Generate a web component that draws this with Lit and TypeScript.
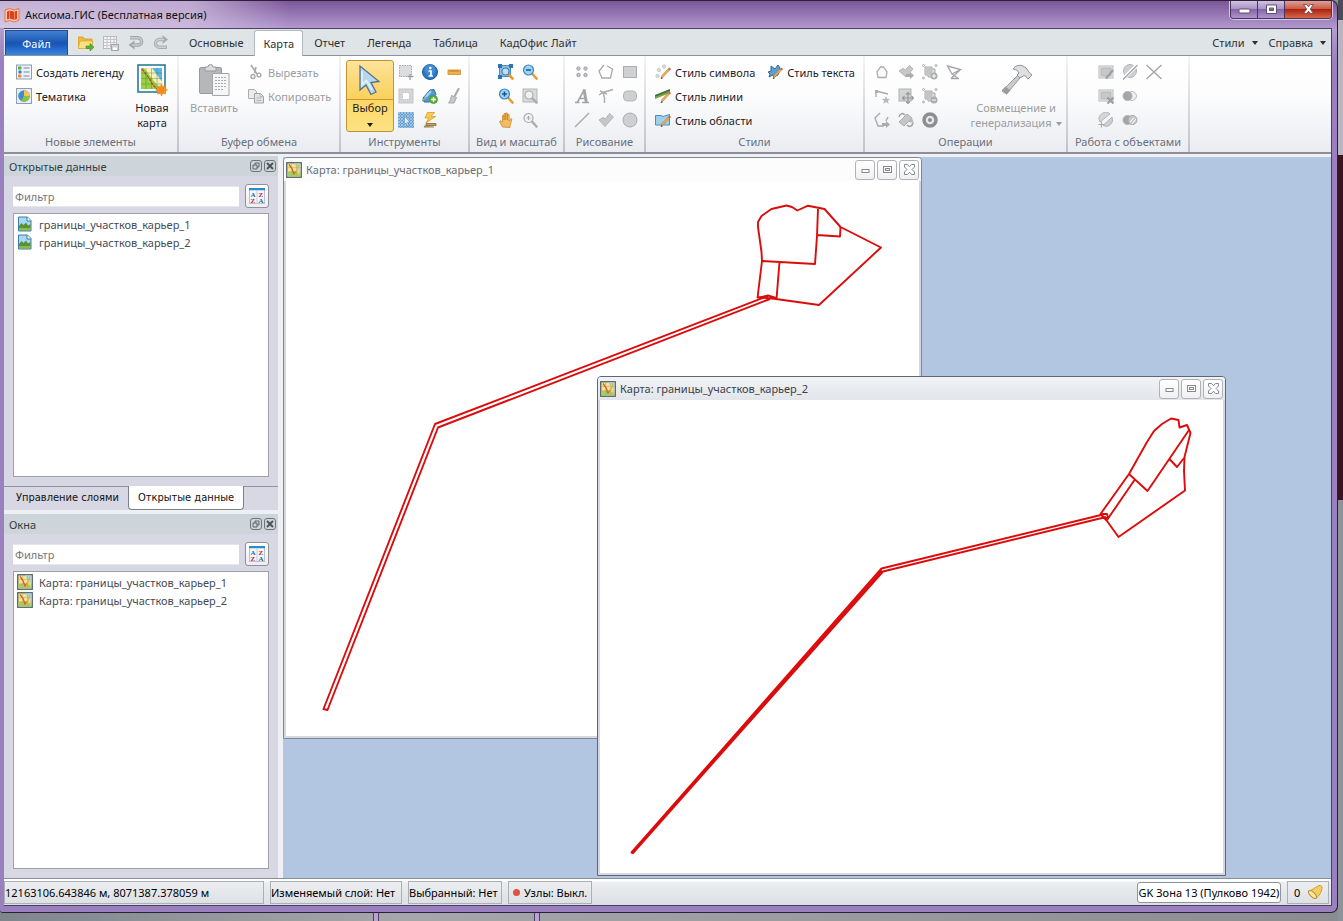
import { LitElement, html, css, svg } from "lit";
import { customElement, property } from "lit/decorators.js";

const G = "#a9abae";
const pencil = svg`<path d="M15 5.500 8.500 12.500 6 15l1-3.500L13.500 4.500z" fill="#f0b25a" stroke="#b5742a" stroke-width=".6"/><path d="M13 5l1.300-1.500L16 5l-1.300 1.400z" fill="#d0604a"/><path d="M6 15l.6-2 1.300 1.200z" fill="#444"/>`;
const lens = (x: number, y: number, r: number, fill: string, rim: string, handle: string) => svg`
  <path d="M${x + r * 0.7} ${y + r * 0.7}L14.500 14.500" stroke="${handle}" stroke-width="2.600" stroke-linecap="round"/>
  <circle cx="${x}" cy="${y}" r="${r}" fill="${fill}" stroke="${rim}" stroke-width="1.200"/>`;
const groupBox = svg`<path d="M3 3h7v2h3v8H6v-2H3z" fill="#d8d9db" stroke="${G}"/><rect x="4" y="4" width="6" height="7" fill="#c2c4c6"/><g fill="none" stroke="${G}"><circle cx="1.500" cy="1.500" r="1"/><circle cx="14" cy="1.500" r="1"/><circle cx="1.500" cy="14" r="1"/></g>`;

const icons: Record<string, unknown> = {
  app: svg`<path d="M1 3l4.500-1.500 5 1.500L15 1.500v11.500L10.500 15l-5-1.500L1 15z" fill="#f7cdb4" stroke="#e8704a"/><path d="M3 4.500l2.500-1 5 1.300 2.500-1v8.200l-2.500 1-5-1.500-2.500 1z" fill="#d8431c"/><path d="M5.500 3.500v8M10.500 4.800v8.200" stroke="#f29a74" stroke-width=".8"/>`,
  open: svg`<path d="M0 2h5l1.500 2H14v9H0z" fill="#eeb93f" stroke="#d19a22" stroke-width=".8"/><path d="M2 6h13l-2 7.500H0z" fill="#fadf83" stroke="#dba833" stroke-width=".8"/><path d="M8 11h4V8.500l4 3.700-4 3.700V13.500H8z" fill="#63ae3a" stroke="#3f8424" stroke-width=".6"/>`,
  table: svg`<rect x=".5" y="1.500" width="13" height="12" fill="#f6f6f7" stroke="#b6b8ba"/><path d="M.5 4.500h13M.5 7.500h13M.5 10.500h13M4 1.500v12M7.500 1.500v12M11 1.500v12" stroke="#c3c5c7"/><rect x="8.500" y="9.500" width="7" height="6" fill="#cfd1d3" stroke="#a3a5a8"/><rect x="10" y="12.500" width="4" height="2.500" fill="#fff"/>`,
  undo: svg`<path d="M2 2.800h8a3.600 3.600 0 0 1 0 7.200H5" fill="none" stroke="#a4a7aa" stroke-width="3.400"/><path d="M6.500 5.500v9L.5 10z" fill="#a4a7aa"/><path d="M2 2.800h8a3.600 3.600 0 0 1 0 7.200H4" fill="none" stroke="#c9cbcd" stroke-width="1.400"/>`,
  redo: svg`<path d="M11 4.500H6.500a3.900 3.900 0 0 0 0 7.800H14" fill="none" stroke="#a9acaf" stroke-width="3.400"/><path d="M9.500 0v9L15 4.500z" fill="#a9acaf"/><path d="M11 4.500H6.500a3.900 3.900 0 0 0 0 7.800H13" fill="none" stroke="#cfd1d3" stroke-width="1.400"/>`,
  legend: svg`<rect x=".5" y="1" width="15" height="14" fill="#eef3fa" stroke="#8d9db4"/><rect x="2" y="2.500" width="3.500" height="3" fill="#5fb04a"/><circle cx="4" cy="8" r="1.700" fill="#2d86c9"/><rect x="2" y="10.500" width="3.500" height="3" fill="#ef8e3a"/><path d="M7.500 4h6M7.500 8h6M7.500 12h6" stroke="#9dabc0" stroke-width="1.300"/>`,
  theme: svg`<rect x=".5" y=".5" width="15" height="15" fill="#e8edf5" stroke="#8d9db4"/><circle cx="8" cy="8" r="5.800" fill="#3d8fcb"/><path d="M8 8V2.200A5.800 5.800 0 0 1 13.800 8z" fill="#f1c551"/><path d="M8 8h5.800A5.800 5.800 0 0 1 5 13z" fill="#8dbf50"/>`,
  cut: svg`<path d="M3 1l6 9M8 3 6.500 9" stroke="#a6a8ab" stroke-width="1.600"/><circle cx="5" cy="12.500" r="2" fill="none" stroke="#a6a8ab" stroke-width="1.400"/><circle cx="11" cy="11" r="1.900" fill="none" stroke="#a6a8ab" stroke-width="1.400"/>`,
  copy: svg`<path d="M.5 1.500h6l2 2v7h-8z" fill="#ececed" stroke="#aaacaf"/><path d="M6.500 5.500h6l3 3v6.500h-9z" fill="#e2e3e4" stroke="#a2a4a7"/><path d="M12 5.500v3h3.500M8.500 10h5M8.500 12.500h5" fill="none" stroke="#b4b6b8"/>`,
  select: svg`<rect x="1.500" y="1.500" width="12" height="11" fill="#dcddde" stroke="#a5a7aa" stroke-dasharray="1.500 1"/><path d="M12 10v6M9.500 12.500h6" stroke="#9c9ea1" stroke-width="1.300"/>`,
  info: svg`<circle cx="8" cy="8" r="7.500" fill="#2878c8" stroke="#1d5c9e"/><circle cx="8" cy="5.500" r="5.500" fill="#5aa0e0" opacity=".5"/><path d="M6.500 7H9v5M6.500 12h4.500" fill="none" stroke="#fff" stroke-width="1.700"/><circle cx="8.300" cy="4" r="1.300" fill="#fff"/>`,
  ruler: svg`<rect x="2" y="6" width="12.500" height="4.500" fill="#efb04a" stroke="#d08d2b" stroke-width=".8"/><path d="M4 6v2M6 6v2M8 6v2M10 6v2M12 6v2" stroke="#a86e1c" stroke-width=".7"/>`,
  frame: svg`<rect x="1" y="1" width="14" height="14" fill="#d3d5d7" stroke="#c3c5c7"/><rect x="4.500" y="4.500" width="7" height="7" fill="#fff" stroke="#c0c2c4" stroke-dasharray="1.500 1"/>`,
  tagadd: svg`<path d="M1 10l7-8 4-.5 2 5-6.500 7.500H2z" fill="#4d9bd3" stroke="#2c6d9f"/><path d="M3 10l6-7" stroke="#a9d5f0" stroke-width="2"/><path d="M0 13l5-4" stroke="#9aa0a6" stroke-width="1.500"/><circle cx="11.500" cy="11.500" r="4" fill="#5db43c" stroke="#3f8d28" stroke-width=".7"/><path d="M11.500 9.200v4.600M9.200 11.500h4.600" stroke="#fff" stroke-width="1.500"/>`,
  broom: svg`<path d="M12.500 1 9 7.500" stroke="#a9abad" stroke-width="2.200" stroke-linecap="round"/><path d="M5.500 7.500l5 2L8 15H2.500c2-2 2-4.500 3-7.500z" fill="#c6c8ca" stroke="#a4a6a9"/>`,
  gridsel: svg`<rect width="16" height="16" fill="#9cc4e6"/><path d="M0 2.500h16M0 5.500h16M0 8.500h16M0 11.500h16M0 14.500h16M2.500 0v16M5.500 0v16M8.500 0v16M11.500 0v16M14.500 0v16" stroke="#6b9fce" stroke-dasharray="2 1"/><path d="M6.500 4l5.500 6-2.500.3 1.200 2.900-1.500.6L8 11l-1.700 1.500z" fill="#dcebf8" stroke="#5d8dbb" stroke-width=".7"/>`,
  flash: svg`<path d="M5.500.5h7L9 4.500h4.500L4 11l3-5H3z" fill="#f8cb52" stroke="#d69a24" stroke-width=".8"/><path d="M4 11.500h10v2H4zM3 13.500l-1 1.500h10" fill="#c9a05a" stroke="#85683a" stroke-width=".8"/>`,
  zoomfit: svg`<rect x="1.500" y="1.500" width="11" height="11" fill="#8fc1e6" stroke="#4a8cc0"/><path d="M0 0h4v4H0zM11 0h4v4h-4zM0 11h4v4H0z" fill="#2e74b0"/>${lens(7.500, 7.500, 3.500, "#bfe0f5", "#3d81b8", "#e39a35")}`,
  zoomout: svg`${lens(6.500, 6, 5, "#9fd3f2", "#3c87bf", "#e59b36")}<path d="M4 6h5" stroke="#19568a" stroke-width="1.500"/>`,
  zoomin: svg`${lens(6.500, 6, 5, "#9fd3f2", "#3c87bf", "#e59b36")}<path d="M4 6h5M6.500 3.500v5" stroke="#19568a" stroke-width="1.500"/>`,
  zoomsel: svg`<rect x="1" y="1" width="14" height="13" fill="#d9dadc" stroke="#b3b5b7"/>${lens(7, 7, 4, "#f1f1f2", "#acaeb1", "#adafb2")}`,
  hand: svg`<path d="M4.500 15 1.500 9.500l1-.8L4.500 10V3.500h1.500V8V1.500h1.700V8V1h1.700v7V2.500h1.700V9l1.800-2.500 1 .8L12 14v1.500z" fill="#f4bd62" stroke="#c98a2e" stroke-width=".8"/>`,
  zoomall: svg`${lens(6.500, 6, 4.500, "#f1f1f2", "#a7a9ac", "#adafb2")}<path d="M4.500 6h4M6.500 4v4" stroke="#a7a9ac"/>`,
  points: svg`<g fill="#c4c6c9" stroke="#9da0a3"><circle cx="4.500" cy="4.500" r="1.700"/><circle cx="11.500" cy="4.500" r="1.700"/><circle cx="4.500" cy="11" r="1.700"/><circle cx="11.500" cy="11" r="1.700"/></g>`,
  polygon: svg`<path d="M6 1 1 7l3 7h8.500l2-9L9 2" fill="none" stroke="${G}" stroke-width="1.300"/>`,
  rect: svg`<rect x="1.500" y="2.500" width="13" height="11" fill="#cfd0d2" stroke="#abadb0"/>`,
  textA: svg`<path d="M1 14.500h4.500M8 14.500h7M3.500 14 10.500 1.500M5.500 10.500h6" fill="none" stroke="#a3a5a8" stroke-width="1.600"/><path d="M10 1.500 12.300 14" stroke="#a3a5a8" stroke-width="3"/>`,
  polyline: svg`<path d="M1 7l4-2.500L15 1.500M5 4.500l1.500 5V15M2 3l7 3" fill="none" stroke="${G}" stroke-width="1.400"/>`,
  rrect: svg`<rect x="1.500" y="3" width="13" height="10" rx="4" fill="#cfd0d2" stroke="#b1b3b5"/>`,
  line: svg`<path d="M1 15 15 1" stroke="${G}" stroke-width="1.400"/>`,
  region: svg`<path d="M1 8l4-2.500L7.500 7l4-5.500 4 3.500L7 14.500z" fill="#c5c7c9" stroke="#b3b5b7"/>`,
  ellipse: svg`<circle cx="8" cy="8" r="7" fill="#cdcfd1" stroke="#a9abae"/>`,
  stsym: svg`<g fill="#d9dbdd" stroke="#b5b8bb" stroke-width=".6"><circle cx="4" cy="6" r="1.700"/><circle cx="9" cy="2.500" r="1.700"/><circle cx="2.500" cy="12" r="1.700"/></g>${pencil}`,
  stline: svg`<path d="M0 7 15 1v4L0 11z" fill="#7ea14a"/><path d="M0 8 15 2" stroke="#3f6f35" stroke-width="1.500"/>${pencil}`,
  stregion: svg`<path d="M.5 3.500H6l2 1 6.500-2V13H.5z" fill="#9fd0ea" stroke="#4b8fb8"/>${pencil}`,
  sttext: svg`<path d="M1 8l3-1V2l4 3 3-4 2 3-1 4-1 3-4 2-1-2-4 2 1-3z" fill="#5f9fd0" stroke="#2c6a9d"/>${pencil}`,
  house: svg`<path d="M4 13.500 3 8l3.500-5h3L13 8l-1 5.500z" fill="#fafafa" stroke="${G}" stroke-width="1.300"/>`,
  regionarrow: svg`<path d="M1 7l4-2.500L7.500 6l4-4.500L15 5l-7 8z" fill="#c5c7c9" stroke="#b3b5b7"/><path d="M8 10h4V8l4 3.500-4 3.500v-2H8z" fill="#a9abae"/>`,
  groupadd: svg`${groupBox}<circle cx="12" cy="12" r="3.500" fill="#a9abae"/><path d="M12 10v4M10 12h4" stroke="#fff"/>`,
  convex: svg`<path d="M1.500 2 14.500 5.500 6 10zM6 10l7 5M14.500 5.500 5 14.500M5 14.500h8" fill="none" stroke="#a3a5a8" stroke-width="1.300"/>`,
  linestar: svg`<path d="M2 9V3l12 3" fill="none" stroke="${G}" stroke-width="1.400"/><rect x="1" y="2" width="3" height="3" fill="#abadaf"/><path d="M12 8l1.200 2.700 3 .2-2.300 1.900.8 2.900L12 14.100 9.400 15.700l.7-2.900L7.800 10.900l3-.2z" fill="#b7b9bb"/>`,
  move: svg`<rect x="1" y="1" width="12" height="12" fill="#d3d4d6" stroke="#b0b2b4"/><path d="M10 4.500v11M4.500 10h11M8 6.500l2-2 2 2M8 13.500l2 2 2-2M6.500 8l-2 2 2 2M13.500 8l2 2-2 2" fill="none" stroke="#96989b" stroke-width="1.200"/>`,
  groupsub: svg`${groupBox}<circle cx="12" cy="12" r="3.500" fill="#a9abae"/><path d="M10 12h4" stroke="#fff"/>`,
  polyopen: svg`<path d="M6 1 1 6l3 8h6M12 9l2-4" fill="none" stroke="${G}" stroke-width="1.400"/><path d="M8 11h4V9l4 3.500-4 3.500v-2H8z" fill="#a9abae"/>`,
  rotate: svg`<path d="M1 10 9 2l5 4-8 8z" fill="#c4c6c8" stroke="#abadaf"/><path d="M1 5c1-4 4-4 6-2M15 11c-1 4-4 4-6 2" fill="none" stroke="#a3a5a8" stroke-width="1.600"/><path d="M10 10l6 1-2-5z" fill="#bbb"/>`,
  ring: svg`<circle cx="8" cy="8" r="6" fill="#e6e7e8" stroke="#8c8e91" stroke-width="3.500"/><circle cx="8" cy="8" r="2" fill="#8c8e91"/>`,
  rectedit: svg`<rect x="1" y="2" width="14" height="12" fill="#efeff0" stroke="#b7b9bb"/><rect x="3" y="4" width="10" height="8" fill="#c6c8ca" stroke="#b1b3b5"/><path d="M15 6 8 14.500" stroke="#9c9ea1" stroke-width="2.200"/>`,
  circslash: svg`<circle cx="8" cy="7" r="6.500" fill="#cdcfd1" stroke="#b3b5b7"/><path d="M1 15 15 1" stroke="#fff" stroke-width="3.500"/><path d="M1 15.500 15.500 1" stroke="#a1a3a6" stroke-width="1.300"/>`,
  cross: svg`<path d="M.5 1 15.500 15M15.500 1 .5 15" stroke="#a1a3a6" stroke-width="1.300"/>`,
  rectx: svg`<rect x="1" y="2" width="14" height="11" fill="#efeff0" stroke="#b7b9bb"/><rect x="3" y="4" width="10" height="7" fill="#c6c8ca" stroke="#b1b3b5"/><path d="M9.500 9.500l6 6M15.500 9.500l-6 6" stroke="#9c9ea1" stroke-width="2.200"/>`,
  venn: svg`<circle cx="10" cy="8" r="4.500" fill="#eeeeef" stroke="#b9bbbd"/><circle cx="5.500" cy="8" r="4.500" fill="#a3a5a8" stroke="#b0b2b4"/>`,
  circsplit: svg`<path d="M2 10A6.500 6.500 0 0 1 12 2z" fill="#d5d6d8" stroke="#b3b5b7"/><path d="M14 5A6.500 6.500 0 0 1 5 13.500z" fill="#cdcfd1" stroke="#b3b5b7"/><path d="M3.500 9.500v6M.5 12.500h6" stroke="#a9abad" stroke-width="1.200"/>`,
  vennhatch: svg`<circle cx="5.500" cy="8" r="4.500" fill="#a3a5a8" stroke="#b0b2b4"/><circle cx="10.500" cy="8" r="4.500" fill="#c6c8ca" stroke="#a3a5a8"/><path d="M8 10.500l4-5M10 12l4-5" stroke="#fff"/>`,
  map: svg`<rect x=".75" y=".75" width="14.500" height="14.500" fill="#f3e394" stroke="#4d6069" stroke-width="1.300"/><path d="M8 1.500h6.500V10L11 6z" fill="#a9d7ee"/><path d="M1.500 10l6-1 7 3v2.500h-13z" fill="#a6cd68"/><path d="M1.500 5.500h13M1.500 10h13M5.500 1.500v13M10.500 1.500v13" stroke="#bba95c" stroke-width=".5"/><path d="M3 2.500l3 4 2 5.500 3-3.500" fill="none" stroke="#d2602a" stroke-width="1.300"/><path d="M13 2.500 9.500 12" stroke="#e3b23c" stroke-width="1.200"/>`,
  picture: svg`<path d="M1.500 1h9L14 4.500V15H1.500z" fill="#a9d8f2" stroke="#3b7cab"/><path d="M10 1v4h4" fill="#fff" stroke="#3b7cab"/><path d="M2 10l2.500-3 2 2L9 6.500l2 3 2.500-1.500v6.500H2z" fill="#5a8f35"/><path d="M2 12h11.500v2.500H2z" fill="#89ba4d"/>`,
  float: svg`<rect x=".5" y=".5" width="11" height="11" rx="2.500" fill="none" stroke="#6d7579"/><path d="M3 5h4v4H3zM5 5V3h4v4H7" fill="none" stroke="#5c6468"/>`,
  closebox: svg`<rect x=".5" y=".5" width="11" height="11" rx="2.500" fill="none" stroke="#6d7579"/><path d="M3 3l6 6M9 3 3 9" stroke="#4d5559" stroke-width="2"/>`,
  min: svg`<rect x="3" y="6.500" width="7" height="3" fill="#fff" stroke="#85888c"/>`,
  max: svg`<rect x="2.500" y="3.500" width="8" height="6" fill="#fff" stroke="#85888c"/><rect x="4.500" y="5.500" width="4" height="2" fill="#fff" stroke="#85888c"/>`,
  close: svg`<path d="M1.500 1.500h3l2 2.300 2-2.300h3v2.500L9 6.500 11.500 9v2.500h-3l-2-2.300-2 2.300h-3V9L4 6.500 1.500 4z" fill="#fff" stroke="#85888c"/>`,
  wmin: svg`<rect x="1" y="6" width="11" height="4" rx="1" fill="#fff" stroke="#5a5564"/>`,
  wmax: svg`<path d="M1.500 2h10v8.500h-10zM4.500 5v2.500h4V5z" fill="#fff" fill-rule="evenodd" stroke="#5a5564"/>`,
  wclose: svg`<path d="M1.500 1.500h3l2 2.300 2-2.300h3L8.300 6l3.200 4.500h-3l-2-2.300-2 2.300h-3L4.700 6z" fill="#fff" stroke="#6b3a3a" stroke-width=".8"/>`,
  bell: svg`<path d="M1.500 7C5 6.500 8 3.500 12 1.500c2-.5 3.500 1 3 3C14 9 12 12 9 14.500c-3 0-7-4-7.500-7.500z" fill="#f5cd62" stroke="#cf9a35"/><ellipse cx="5.500" cy="10.500" rx="2.300" ry="5" transform="rotate(-45 5.500 10.500)" fill="#fae7a6" stroke="#c08c2c"/>`,
};

const big: Record<string, unknown> = {
  newmap: svg`<rect x="2" y="1" width="27" height="27" fill="#fff" stroke="#1c7492" stroke-width="1.500"/><rect x="5" y="4" width="21" height="21" fill="#9bd03f"/><path d="M12 4h14v16z" fill="#58b7ea"/><path d="M8 4h8l11 15v6h-3z" fill="#fdf0b9"/><path d="M5 9h21M5 14.500h21M5 20h21M10 4v21M15.500 4v21M21 4v21" stroke="#3e7f45" stroke-width=".7" opacity=".6"/><path d="M6 5l7 9 4 7 4 4" fill="none" stroke="#b5462c" stroke-width="1.300" stroke-dasharray="3 1"/><circle cx="25.500" cy="26" r="4.500" fill="#f79a26"/><path d="M25.500 20v12M19.500 26h12M21.500 22l8 8M29.500 22l-8 8" stroke="#f08a1c" stroke-width="1.300"/>`,
  paste: svg`<rect x="1.500" y="3.500" width="22" height="26" rx="1.500" fill="#b5b7b9" stroke="#97999c"/><path d="M7 3h3a2.500 2.500 0 0 1 5 0h3v4H7z" fill="#dcddde" stroke="#97999c"/><path d="M14.500 9.500H31V31.500H14.500z" fill="#f6f6f7" stroke="#a4a6a9"/><path d="M17 13.500h11M17 16.500h11M17 19.500h11M17 22.500h11M17 25.500h8" stroke="#a9abae" stroke-dasharray="2 1"/>`,
  arrow: svg`<path d="M6 2v24l6-5 5 9.500 5-2.500-5-9.500 8-1z" fill="#b7d7ee" stroke="#55728c" stroke-width="1.300"/><path d="M8 7v14l4.500-4.500L18 26" fill="none" stroke="#e6f3fb" stroke-width="1.600"/>`,
  hammer: svg`<path d="M17.500 11.500 20 14 6.500 30 2 27z" fill="#c9cbcd" stroke="#97999c"/><path d="M2 26l3.500-3.500 5 4L6.500 30.500z" fill="#9a9c9f"/><path d="M13 5c3-4.500 9-5 13-1l4 5.500 2 1.500-4 4-2.500-3-1.500-.5L20 14l-3-3 2-2c-1-2.500-3-3.500-6-4z" fill="#dedfe0" stroke="#8e9093"/>`,
};

const ico = (name: string, cls = "i16") =>
  html`<svg class=${cls} viewBox=${cls === "i12" ? "0 0 12 12" : cls === "i13" ? "0 0 13 13" : "0 0 16 16"} aria-hidden="true">${icons[name]}</svg>`;
const bigIco = (name: string) => html`<svg class="i32" viewBox="0 0 32 32" aria-hidden="true">${big[name]}</svg>`;

const shared = css`
  :host, * { box-sizing: border-box; }
  button, input { font: inherit; color: inherit; margin: 0; }
  button { background: none; border: 0; padding: 0; white-space: nowrap; }
  svg { display: block; flex: none; }
  .i16 { width: 16px; height: 16px; }
  .i12 { width: 12px; height: 12px; }
  .i13 { width: 13px; height: 13px; }
  .i32 { width: 32px; height: 32px; }
`;

@customElement("dock-panel")
class DockPanel extends LitElement {
  @property() heading = "";
  @property() icon = "map";
  @property({ attribute: false }) items: string[] = [];

  static styles = [shared, css`
    :host { display: flex; flex-direction: column; min-height: 0; }
    .head { display: flex; align-items: center; gap: 2px; height: 20px; padding: 0 2px 0 5px; background: #cdd5da; color: #353c42; }
    .head h2 { flex: 1; margin: 0; font-size: 11px; font-weight: 400; }
    .filter { display: flex; align-items: center; gap: 6px; padding: 8px 9px 5px; }
    .box { flex: 1; min-width: 0; height: 21px; border: 1px solid #e6e6ee; border-width: 1px 0; padding: 0 2px; background: #fff; }
    .box::placeholder { color: #74777b; opacity: 1; }
    .sort { width: 24px; height: 24px; display: grid; place-items: center; border: 1px solid #8f9196; border-radius: 3px; background: linear-gradient(#fff, #eeeef1); }
    .sort svg { width: 16px; height: 16px; }
    .sort text { font: bold 7px "Liberation Serif", serif; }
    .list { flex: 1; min-height: 0; margin: 0 9px 9px; padding: 1px 3px; list-style: none; background: #fff; border: 1px solid #9fa0a8; color: #454b55; }
    .list li { display: flex; align-items: center; gap: 6px; height: 18px; }
  `];

  render() {
    return html`
      <div class="head"><h2>${this.heading}</h2>
        <button aria-label="Открепить">${ico("float", "i12")}</button>
        <button aria-label="Закрыть">${ico("closebox", "i12")}</button>
      </div>
      <div class="filter">
        <input class="box" type="text" placeholder="Фильтр" aria-label="Фильтр">
        <button class="sort" aria-label="Сортировка"><svg viewBox="0 0 16 16">
          <rect x=".5" y=".5" width="15" height="15" fill="#f4f6f9" stroke="#b9c2cb"/><path d="M0 1h16" stroke="#2c8cc9" stroke-width="2.500"/><path d="M8 2v13" stroke="#c3ccd4"/>
          <text x="1.500" y="8.500" fill="#2b62a4">A</text><text x="9.500" y="8.500" fill="#b52a2a">Z</text>
          <text x="1.500" y="15" fill="#b52a2a">Z</text><text x="9.500" y="15" fill="#2b62a4">A</text>
        </svg></button>
      </div>
      <ul class="list">${this.items.map((t) => html`<li>${ico(this.icon)}<span>${t}</span></li>`)}</ul>`;
  }
}

@customElement("map-window")
class MapWindow extends LitElement {
  @property() heading = "";

  static styles = [shared, css`
    :host { display: flex; flex-direction: column; background: #d6d7e4; border: 1px solid #7c8894; border-radius: 4px 4px 0 0; padding: 0 2px 2px; }
    .bar { display: flex; align-items: center; gap: 4px; height: 23px; margin: 0 -2px; padding: 0 2px; background: var(--bar, #fcfcfd); color: var(--ink, #6a6d72); border-radius: 3px 3px 0 0; }
    .bar h2 { flex: 1; margin: 0; font-size: 11px; font-weight: 400; }
    .bar button { width: 20px; height: 20px; display: grid; place-items: center; border: 1px solid #b0b2b7; border-radius: 3px; background: linear-gradient(#fff, #f0f0f3); }
    .ctl { display: flex; gap: 2px; }
    .body { flex: 1; min-height: 0; background: #fff; overflow: hidden; }
  `];

  render() {
    return html`
      <div class="bar">${ico("map")}<h2>${this.heading}</h2>
        <div class="ctl">
          <button aria-label="Свернуть">${ico("min", "i13")}</button>
          <button aria-label="Развернуть">${ico("max", "i13")}</button>
          <button aria-label="Закрыть">${ico("close", "i13")}</button>
        </div>
      </div>
      <div class="body"><slot></slot></div>`;
  }
}

const iconGrid = (cols: string, names: (string | null)[]) => html`
  <div class="grid ${cols}">${names.map((n) => n ? html`<button class="tool" aria-label=${n}>${ico(n)}</button>` : html`<span></span>`)}</div>`;
const item = (icon: string, label: string, off = false) =>
  html`<button class="item ${off ? "off" : ""}">${ico(icon)}<span>${label}</span></button>`;
const group = (cls: string, title: string, body: unknown) => html`
  <section class="group ${cls}"><div class="content">${body}</div><h3>${title}</h3></section>`;

@customElement("app-root")
class AppRoot extends LitElement {
  static styles = [shared, css`
    :host {
      display: grid; grid-template: minmax(0, 1fr) / minmax(0, 1fr); height: 100vh; padding: 0 5px 8px 0;
      font: 11px/15px "Noto Sans", "Open Sans", sans-serif; color: #1d2126;
      background:
        linear-gradient(#4a4d55 0 20px, #b9b4c2 20px 155px, #3a1420 155px 500px, #8d939a 500px) right / 5px 100% no-repeat,
        linear-gradient(90deg, #4d3f63 0 1px, #b9a3d2 1px 5px, #4d3f63 5px) 373px 100% / 6px 8px no-repeat,
        linear-gradient(90deg, #4d3f63 0 1px, #b9a3d2 1px 5px, #4d3f63 5px) 534px 100% / 6px 8px no-repeat,
        linear-gradient(90deg, #7e868c, #a5a8aa 30%, #8a8d90);
    }
    .win { display: flex; flex-direction: column; min-height: 0; padding: 0 5px 6px 4px; border: 1px solid #2b1f3a; border-width: 1px 1px 1px 0; border-radius: 0 7px 7px 3px; background: linear-gradient(#7b5698, #b49bd0 28px, #9a80bf 60px, #9a80bf); overflow: hidden; }
    .title { display: flex; align-items: center; gap: 5px; height: 27px; margin: 0 0 0 -4px; padding: 0 0 0 4px; background: linear-gradient(90deg, #e6dcefb0 0, #d3c3e2c0 190px, #d3c3e200 290px); }
    .title h1 { flex: 1; margin: 0; font-size: 11px; font-weight: 400; color: #111; }
    .wctl { align-self: flex-start; display: flex; border: 1px solid #47365a; border-top: 0; border-radius: 0 0 4px 4px; overflow: hidden; box-shadow: 0 0 0 1px #d7c8e6; }
    .wctl button { width: 27px; height: 17px; display: grid; place-items: center; background: linear-gradient(#d2c3e0, #a78dc2 50%, #8565a8 50%, #b094cc); border-right: 1px solid #47365a; }
    .wctl .x { width: 46px; border: 0; background: linear-gradient(#e0a097, #c9543f 50%, #aa2412 50%, #d9694a); }
    .client { flex: 1; min-height: 0; display: flex; flex-direction: column; border: 1px solid #4d3f63; border-width: 1px 1px 1px 0; background: #eef0f4; }
    .tabs { display: flex; align-items: stretch; height: 27px; padding: 1px 0 0 1px; background: #dfe4e7; border-bottom: 1px solid #8b93a0; color: #2c3136; }
    .tabs .file { width: 63px; margin-right: 10px; color: #fff; background: linear-gradient(#4180d3, #1b54b0 50%, #1c5cc0 60%, #3a86dc); border: 1px solid #1d4c98; border-bottom: 0; }
    .tabs .q { width: 25px; display: flex; align-items: center; }
    .tab { padding: 0 11px; }
    .tabs .on { background: #fff; border: 1px solid #b1b8c0; border-bottom: 0; border-radius: 3px 3px 0 0; margin-bottom: -1px; padding: 0 8px; }
    .spacer { flex: 1; }
    .tabs .drop { display: flex; align-items: center; gap: 7px; padding: 0 5px 0 6px; }
    .drop::after, .caret { content: ""; border: 3px solid transparent; border-top: 4px solid currentColor; border-bottom: 0; }
    .ribbon { display: flex; height: 98px; background: linear-gradient(#fff 0, #fdfdfe 40%, #eaecf0); border-bottom: 2px solid #8b8f9b; }
    .group { flex: none; display: flex; flex-direction: column; border-right: 2px solid; border-image: linear-gradient(#f4f4f4, #c0c2c9) 1; }
    .content { display: flex; height: 77px; padding-top: 4px; }
    .group h3 { margin: 0; font-size: 11px; line-height: 18px; font-weight: 400; text-align: center; color: #687080; white-space: nowrap; }
    .g1 { width: 175px; } .g1 .content { padding-left: 12px; }
    .g2 { width: 162px; } .g2 .content { padding-left: 7px; }
    .g3 { width: 129px; } .g3 .content { padding-left: 5px; }
    .g4 { width: 95px; } .g4 .content { padding-left: 24px; }
    .g5 { width: 81px; } .g5 .content { padding-left: 5px; }
    .g6 { width: 219px; } .g6 .content { padding-left: 9px; gap: 12px; }
    .g7 { width: 203px; } .g7 .content { padding-left: 5px; }
    .g8 { width: 122px; } .g8 .content { padding-left: 26px; }
    .col { display: flex; flex-direction: column; }
    .item { display: flex; align-items: center; gap: 4px; height: 24px; }
    .off { color: #9b9da1; }
    .grid { display: grid; grid-auto-rows: 24px; align-content: start; }
    .c2 { grid-template-columns: repeat(2, 24px); }
    .c3 { grid-template-columns: repeat(3, 24px); }
    .c4 { grid-template-columns: repeat(4, 24px); }
    .tool { display: grid; place-items: center; }
    .large { display: flex; flex-direction: column; align-items: center; height: 72px; padding-top: 4px; gap: 4px; }
    .large span { display: block; }
    .w48 { width: 48px; } .w56 { width: 56px; }
    .g1 .col { width: 112px; }
    .g2 .col { margin-left: 6px; }
    .g7 .large { width: 102px; }
    .pick { border: 1px solid #bb9436; border-radius: 3px; padding: 3px 0 0; background: linear-gradient(#fde39a, #fbd15c 38px, #c59a34 38px 39px, #fdd765 39px, #fde283); }
    .pick .caret { margin-top: 4px; }
    .tri { display: inline-block; margin-left: 4px; vertical-align: 1px; }
    .main { flex: 1; min-height: 0; display: grid; grid-template-columns: 274px minmax(0, 1fr); gap: 5px; padding-top: 2px; }
    .dock { display: flex; flex-direction: column; min-height: 0; gap: 4px; }
    .pane { display: flex; flex-direction: column; min-height: 0; background: #d8d7e4; }
    .pane dock-panel { flex: 1; }
    .top { flex: 354 1 0; } .bottom { flex: 364 1 0; }
    .dtabs { display: flex; height: 24px; border-top: 1px solid #8f93a0; font: 11px/14px "DejaVu Sans Condensed", "Noto Sans", sans-serif; color: #111; }
    .dtabs button { padding: 0 9px 0 12px; height: 22px; }
    .dtabs .on { padding: 1px 9px 0; height: 24px; margin-top: -1px; background: #fff; border: 1px solid #7b8188; border-top: 0; border-radius: 0 0 4px 4px; }
    .space { position: relative; overflow: hidden; margin-top: 1px; background: #b2c6e2; }
    .m1, .m2 { position: absolute; }
    .m1 { left: 0; top: 0; width: 639px; height: 582px; }
    .m2 { left: 314px; top: 219px; width: 629px; height: 500px; --bar: linear-gradient(#f2f3f6, #e2e5ea); --ink: #3b3f45; border-color: #5e6873; }
    .plan { width: 100%; height: 100%; fill: none; stroke: #dc0c0c; stroke-width: 1.900; stroke-linejoin: round; }
    .status { display: flex; align-items: center; gap: 6px; height: 27px; padding: 0 2px 0 0; border-top: 1px solid #8a8e98; background: linear-gradient(#fff 0 2px, #eceef1 3px, #dcdfe3); color: #000; }
    .cell { display: flex; align-items: center; height: 23px; border: 1px solid #aab0b6; white-space: nowrap; overflow: hidden; }
    .coords { width: 260px; } .s1 { width: 132px; } .s2 { width: 94px; } .s3 { width: 84px; padding-left: 4px; gap: 4px; }
    .dot { width: 7px; height: 7px; border-radius: 50%; background: #dd5244; }
    .crs { width: 144px; height: 21px; justify-content: center; background: #fff; border: 1px solid #8f9499; border-radius: 3px; }
    .bell { width: 42px; gap: 7px; padding-left: 6px; }
  `];

  render() {
    return html`
      <div class="win">
        <header class="title">${ico("app")}<h1>Аксиома.ГИС (Бесплатная версия)</h1>
          <div class="wctl">
            <button aria-label="Свернуть">${ico("wmin", "i13")}</button>
            <button aria-label="Развернуть">${ico("wmax", "i13")}</button>
            <button class="x" aria-label="Закрыть">${ico("wclose", "i13")}</button>
          </div>
        </header>
        <div class="client">
          <nav class="tabs">
            <button class="file">Файл</button>
            ${["open", "table", "undo", "redo"].map((n) => html`<button class="q" aria-label=${n}>${ico(n)}</button>`)}
            ${["Основные", "Карта", "Отчет", "Легенда", "Таблица", "КадОфис Лайт"].map((t) => html`<button class=${t === "Карта" ? "tab on" : "tab"}>${t}</button>`)}
            <span class="spacer"></span>
            <button class="drop">Стили</button><button class="drop">Справка</button>
          </nav>
          <div class="ribbon">
            ${group("g1", "Новые элементы", html`
              <div class="col">${item("legend", "Создать легенду")}${item("theme", "Тематика")}</div>
              <button class="large w48">${bigIco("newmap")}<span>Новая<br>карта</span></button>`)}
            ${group("g2", "Буфер обмена", html`
              <button class="large off w56">${bigIco("paste")}<span>Вставить</span></button>
              <div class="col">${item("cut", "Вырезать", true)}${item("copy", "Копировать", true)}</div>`)}
            ${group("g3", "Инструменты", html`
              <button class="large pick w48">${bigIco("arrow")}<span>Выбор</span><i class="caret"></i></button>
              ${iconGrid("c3", ["select", "info", "ruler", "frame", "tagadd", "broom", "gridsel", "flash"])}`)}
            ${group("g4", "Вид и масштаб", iconGrid("c2", ["zoomfit", "zoomout", "zoomin", "zoomsel", "hand", "zoomall"]))}
            ${group("g5", "Рисование", iconGrid("c3", ["points", "polygon", "rect", "textA", "polyline", "rrect", "line", "region", "ellipse"]))}
            ${group("g6", "Стили", html`
              <div class="col">${item("stsym", "Стиль символа")}${item("stline", "Стиль линии")}${item("stregion", "Стиль области")}</div>
              <div class="col">${item("sttext", "Стиль текста")}</div>`)}
            ${group("g7", "Операции", html`
              ${iconGrid("c4", ["house", "regionarrow", "groupadd", "convex", "linestar", "move", "groupsub", null, "polyopen", "rotate", "ring"])}
              <button class="large off">${bigIco("hammer")}<span>Совмещение и<br>генерализация<i class="caret tri"></i></span></button>`)}
            ${group("g8", "Работа с объектами", iconGrid("c3", ["rectedit", "circslash", "cross", "rectx", "venn", null, "circsplit", "vennhatch"]))}
          </div>
          <div class="main">
            <aside class="dock">
              <div class="pane top">
                <dock-panel heading="Открытые данные" icon="picture" .items=${["границы_участков_карьер_1", "границы_участков_карьер_2"]}></dock-panel>
                <div class="dtabs"><button>Управление слоями</button><button class="on">Открытые данные</button></div>
              </div>
              <div class="pane bottom">
                <dock-panel heading="Окна" icon="map" .items=${["Карта: границы_участков_карьер_1", "Карта: границы_участков_карьер_2"]}></dock-panel>
              </div>
            </aside>
            <main class="space">
              <map-window class="m1" heading="Карта: границы_участков_карьер_1">
                <svg class="plan" viewBox="286 181 633 555" preserveAspectRatio="xMinYMin">
                  <path d="M762 261 761.500 252 758 227V222L761.500 216 771.500 209 786.500 205.500 792 207 797.300 210.500 808 205.700 824.500 209 840.500 227 881 247.500 819 305 776 299"/>
                  <path d="M818 209 817 236 815 264 762 261 757.500 298M817 235 840 236.500 840.500 227M779.500 262 776.500 299M757.500 298 768 295.500 776 298M757 297 776 299"/>
                  <path d="M768 296 435 424 323.500 709 327.500 710 438 427.500 770 299"/>
                </svg>
              </map-window>
              <map-window class="m2" heading="Карта: границы_участков_карьер_2">
                <svg class="plan" viewBox="600 400 623 473" preserveAspectRatio="xMinYMin">
                  <path d="M1100.500 514 1129 474 1147 442 1154 431 1162 424 1171 418.500 1178.500 420 1179.500 427.500 1187 425 1190.500 433 1184.500 457 1184 471 1185 490.500 1118.500 537 1107 521z"/>
                  <path d="M1189 430 1147.500 491 1129 474M1134.500 480 1107 520M1169.500 459 1177 467 1184 458M1100 514 1107 514 1108 518 1102 518"/>
                  <path d="M1105 514 881.500 568.500 631.500 852.500 633 853 883 571.500 1106 517"/>
                  <path d="M882 570.500 632 853"/>
                </svg>
              </map-window>
            </main>
          </div>
          <footer class="status">
            <div class="cell coords">12163106.643846 м, 8071387.378059 м</div>
            <div class="cell s1">Изменяемый слой: Нет</div>
            <div class="cell s2">Выбранный: Нет</div>
            <div class="cell s3"><span class="dot"></span>Узлы: Выкл.</div>
            <span class="spacer"></span>
            <button class="cell crs">GK Зона 13 (Пулково 1942)</button>
            <button class="cell bell">0 ${ico("bell")}</button>
          </footer>
        </div>
      </div>`;
  }
}
